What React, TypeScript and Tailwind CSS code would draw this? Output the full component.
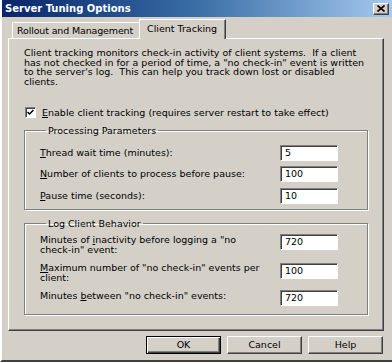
import React from "react";

const raised =
  "border border-t-white border-l-white border-r-[#404040] border-b-[#404040] shadow-[inset_-1px_-1px_0_#808080]";

const Field: React.FC<{ value: string }> = ({ value }) => (
  <div className="w-[58px] h-[16px] shrink-0 bg-white border border-t-[#808080] border-l-[#808080] border-r-white border-b-white shadow-[inset_1px_1px_0_#404040] pl-[4px] flex items-center leading-none">
    {value}
  </div>
);

const Button: React.FC<{ label: string; def?: boolean }> = ({ label, def }) => (
  <div
    className={`w-[75px] h-[18px] flex items-center justify-center leading-none ${
      def
        ? "border border-black shadow-[inset_1px_1px_0_white,inset_-1px_-1px_0_#404040,inset_-2px_-2px_0_#808080]"
        : raised
    }`}
  >
    {label}
  </div>
);

const GroupBox: React.FC<{ title: string; className?: string; children: React.ReactNode }> = ({
  title,
  className,
  children,
}) => (
  <fieldset
    className={`mr-[15px] border border-[#808080] shadow-[inset_1px_1px_0_white,1px_1px_0_white] pl-[15px] pr-[29px] ${className ?? ""}`}
  >
    <legend className="ml-[6px] px-[2px] leading-[10px]">{title}</legend>
    {children}
  </fieldset>
);

const App: React.FC = () => {
  return (
    <div className="w-[392px] h-[362px] bg-[#d4d0c8] flex flex-col font-['DejaVu_Sans',sans-serif] text-[9.5px] text-black border-l-2 border-l-white border-b-2 border-b-[#404040] overflow-hidden">
      {/* title bar */}
      <div className="h-[17px] shrink-0 flex items-center justify-between pl-[3px] pr-[3px] bg-gradient-to-r from-[#0a246a] via-[#3a6ea5] to-[#a6caf0]">
        <span className="text-white font-bold text-[10px] leading-none">Server Tuning Options</span>
        <div className={`w-[16px] h-[12px] bg-[#d4d0c8] flex items-center justify-center ${raised}`}>
          <svg width="8" height="7" viewBox="0 0 8 7">
            <path d="M0.5 0.5 L7.5 6.5 M7.5 0.5 L0.5 6.5" stroke="black" strokeWidth="1.6" />
          </svg>
        </div>
      </div>

      {/* tabs */}
      <div className="mt-[2px] flex items-end pl-[10px] h-[19px] shrink-0 relative z-10">
        <div className="h-[16px] w-[127px] border-t border-l border-t-white border-l-white flex items-center pl-[4px] leading-none tracking-[-0.15px] whitespace-nowrap">
          Rollout and Management
        </div>
        <div className="h-[20px] w-[87px] -mb-[1px] bg-[#d4d0c8] border-t border-l border-r border-t-white border-l-white border-r-[#404040] shadow-[inset_-1px_0_0_#808080] flex items-center pl-[7px] pb-[2px] leading-none">
          Client Tracking
        </div>
      </div>

      {/* panel */}
      <div className={`ml-[6px] w-[376px] h-[293px] shrink-0 pt-[9px] pl-[15px] ${raised}`}>
        <p className="leading-[9.7px] whitespace-nowrap">
          Client tracking monitors check-in activity of client systems.&nbsp; If a client
          <br />
          has not checked in for a period of time, a "no check-in" event is written
          <br />
          to the server's log.&nbsp; This can help you track down lost or disabled
          <br />
          clients.
        </p>

        <div className="mt-[20px] h-[11px] flex items-center">
          <div className="ml-[1px] w-[11px] h-[11px] bg-white border border-t-[#808080] border-l-[#808080] border-r-white border-b-white shadow-[inset_1px_1px_0_#404040] flex items-center justify-center">
            <svg width="7" height="7" viewBox="0 0 7 7">
              <path d="M0.5 3 L2.5 5 L6.5 1" stroke="black" strokeWidth="1.5" fill="none" />
            </svg>
          </div>
          <span className="ml-[6px] leading-none">
            <u>E</u>nable client tracking (requires server restart to take effect)
          </span>
        </div>

        <GroupBox title="Processing Parameters" className="mt-[8px] pb-[5px]">
          <div className="mt-[9px] flex items-center justify-between">
            <span>
              <u>T</u>hread wait time (minutes):
            </span>
            <Field value="5" />
          </div>
          <div className="mt-[5px] flex items-center justify-between">
            <span>
              <u>N</u>umber of clients to process before pause:
            </span>
            <Field value="100" />
          </div>
          <div className="mt-[6px] flex items-center justify-between">
            <span>
              <u>P</u>ause time (seconds):
            </span>
            <Field value="10" />
          </div>
        </GroupBox>

        <GroupBox title="Log Client Behavior" className="mt-[9px] pb-[8px]">
          <div className="mt-[5px] flex items-start justify-between">
            <span className="leading-[10px] pt-[1px]">
              Minutes of <u>i</u>nactivity before logging a "no
              <br />
              check-in" event:
            </span>
            <Field value="720" />
          </div>
          <div className="mt-[8px] flex items-start justify-between">
            <span className="leading-[10px]">
              <u>M</u>aximum number of "no check-in" events per
              <br />
              client:
            </span>
            <Field value="100" />
          </div>
          <div className="mt-[7px] flex items-center justify-between">
            <span className="leading-[10px] -mt-[4px]">
              Minutes <u>b</u>etween "no check-in" events:
            </span>
            <Field value="720" />
          </div>
        </GroupBox>
      </div>

      {/* buttons */}
      <div className="mt-[5px] flex justify-end gap-[6px] pr-[9px]">
        <Button label="OK" def />
        <Button label="Cancel" />
        <Button label="Help" />
      </div>
    </div>
  );
};

export default App;
